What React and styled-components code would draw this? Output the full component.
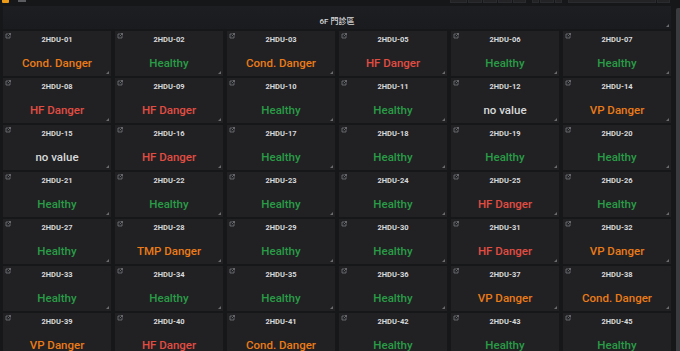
import React from 'react';
import styled, { createGlobalStyle } from 'styled-components';

const GlobalStyle = createGlobalStyle`
  html, body {
    margin: 0;
    padding: 0;
    background: #161719;
    height: 351px;
    overflow: hidden;
    font-family: Roboto, "Noto Sans CJK TC", "Liberation Sans", sans-serif;
  }
`;

const colors = {
  ok: '#299c46',
  cond: '#eb7b18',
  hf: '#e24d42',
  none: '#d8d9da',
};

const rows = [
  [['01', 'Cond. Danger', 'cond'], ['02', 'Healthy', 'ok'], ['03', 'Cond. Danger', 'cond'], ['05', 'HF Danger', 'hf'], ['06', 'Healthy', 'ok'], ['07', 'Healthy', 'ok']],
  [['08', 'HF Danger', 'hf'], ['09', 'HF Danger', 'hf'], ['10', 'Healthy', 'ok'], ['11', 'Healthy', 'ok'], ['12', 'no value', 'none'], ['14', 'VP Danger', 'cond']],
  [['15', 'no value', 'none'], ['16', 'HF Danger', 'hf'], ['17', 'Healthy', 'ok'], ['18', 'Healthy', 'ok'], ['19', 'Healthy', 'ok'], ['20', 'Healthy', 'ok']],
  [['21', 'Healthy', 'ok'], ['22', 'Healthy', 'ok'], ['23', 'Healthy', 'ok'], ['24', 'Healthy', 'ok'], ['25', 'HF Danger', 'hf'], ['26', 'Healthy', 'ok']],
  [['27', 'Healthy', 'ok'], ['28', 'TMP Danger', 'cond'], ['29', 'Healthy', 'ok'], ['30', 'Healthy', 'ok'], ['31', 'HF Danger', 'hf'], ['32', 'VP Danger', 'cond']],
  [['33', 'Healthy', 'ok'], ['34', 'Healthy', 'ok'], ['35', 'Healthy', 'ok'], ['36', 'Healthy', 'ok'], ['37', 'VP Danger', 'cond'], ['38', 'Cond. Danger', 'cond']],
  [['39', 'VP Danger', 'cond'], ['40', 'HF Danger', 'hf'], ['41', 'Cond. Danger', 'cond'], ['42', 'Healthy', 'ok'], ['43', 'Healthy', 'ok'], ['45', 'Healthy', 'ok']],
];

const TopNav = styled.div`
  height: 4px;
  overflow: hidden;
  display: flex;
  align-items: flex-start;
  justify-content: space-between;
  padding: 0 10px 0 2px;
`;

const Brand = styled.div`
  display: flex;
  gap: 9px;
  align-items: flex-start;
`;

const Logo = styled.div`
  width: 7px;
  height: 3px;
  background: #eb9b18;
  border-radius: 0 0 1px 1px;
`;

const Crumb = styled.div`
  width: 8px;
  height: 2px;
  background: #5b5c60;
`;

const Tools = styled.div`
  display: flex;
  gap: 6px;
`;

const ToolGroup = styled.div`
  display: flex;
  gap: 1px;
`;

const ToolButton = styled.div`
  width: ${p => p.w}px;
  height: 3px;
  background: #232326;
  border: 1px solid #2a2b2e;
  border-top: none;
  box-sizing: border-box;
`;

const Body = styled.div`
  display: flex;
`;

const Main = styled.div`
  padding-left: 3px;
  width: 668px;
`;

const Scrollbar = styled.div`
  margin-left: 5px;
  margin-top: 4px;
  width: 4px;
  height: 347px;
  background: #3a3b3f;
  border-radius: 2px 0 0 0;
`;

const TitlePanel = styled.div`
  position: relative;
  margin: 2px 0;
  height: 23px;
  background: linear-gradient(#1d1e21, #1a1b1e);
  display: flex;
  align-items: flex-end;
  justify-content: center;
  padding-bottom: 2px;
  box-sizing: border-box;
`;

const Title = styled.div`
  color: #d8d9da;
  font-size: 8px;
  font-weight: 500;
  line-height: 10px;
`;

const Grid = styled.div`
  display: grid;
  grid-template-columns: repeat(6, 108px);
  grid-auto-rows: 45px;
  column-gap: 4px;
  row-gap: 2px;
`;

const Panel = styled.div`
  position: relative;
  background: #212124;
  display: flex;
  flex-direction: column;
  align-items: center;
  padding-top: 4px;
  box-sizing: border-box;
`;

const Label = styled.div`
  color: #d8d9da;
  font-size: 7.5px;
  font-weight: 700;
  line-height: 9px;
`;

const Value = styled.div`
  margin-top: 12px;
  color: ${p => colors[p.kind]};
  font-size: 11.5px;
  font-weight: 500;
  line-height: 14px;
`;

const LinkIcon = styled.svg`
  position: absolute;
  left: 2px;
  top: 2px;
`;

const Handle = styled.div`
  position: absolute;
  right: 2px;
  bottom: 2px;
  width: 0;
  height: 0;
  border-left: 3px solid transparent;
  border-bottom: 3px solid #6a6b6f;
`;

const Link = () => (
  <LinkIcon width="6" height="6" viewBox="0 0 6 6">
    <path d="M3 1H1v4h4V3" fill="none" stroke="#77787c" strokeWidth="0.8" />
    <path d="M3.5 0.5h2v2M5.5 0.5L2.8 3.2" fill="none" stroke="#77787c" strokeWidth="0.8" />
  </LinkIcon>
);

export default function App() {
  return (
    <>
      <GlobalStyle />
      <TopNav>
        <Brand>
          <Logo />
          <Crumb />
        </Brand>
        <Tools>
          <ToolGroup>
            <ToolButton w={17} />
            <ToolButton w={14} />
            <ToolButton w={14} />
            <ToolButton w={14} />
            <ToolButton w={13} />
          </ToolGroup>
          <ToolGroup>
            <ToolButton w={7} />
            <ToolButton w={14} />
            <ToolButton w={7} />
          </ToolGroup>
          <ToolGroup>
            <ToolButton w={88} />
            <ToolButton w={13} />
          </ToolGroup>
        </Tools>
      </TopNav>
      <Body>
        <Main>
          <TitlePanel>
            <Title>6F 門診區</Title>
            <Handle />
          </TitlePanel>
          <Grid>
            {rows.flat().map(([id, text, kind]) => (
              <Panel key={id}>
                <Link />
                <Label>2HDU-{id}</Label>
                <Value kind={kind}>{text}</Value>
                <Handle />
              </Panel>
            ))}
          </Grid>
        </Main>
        <Scrollbar />
      </Body>
    </>
  );
}
